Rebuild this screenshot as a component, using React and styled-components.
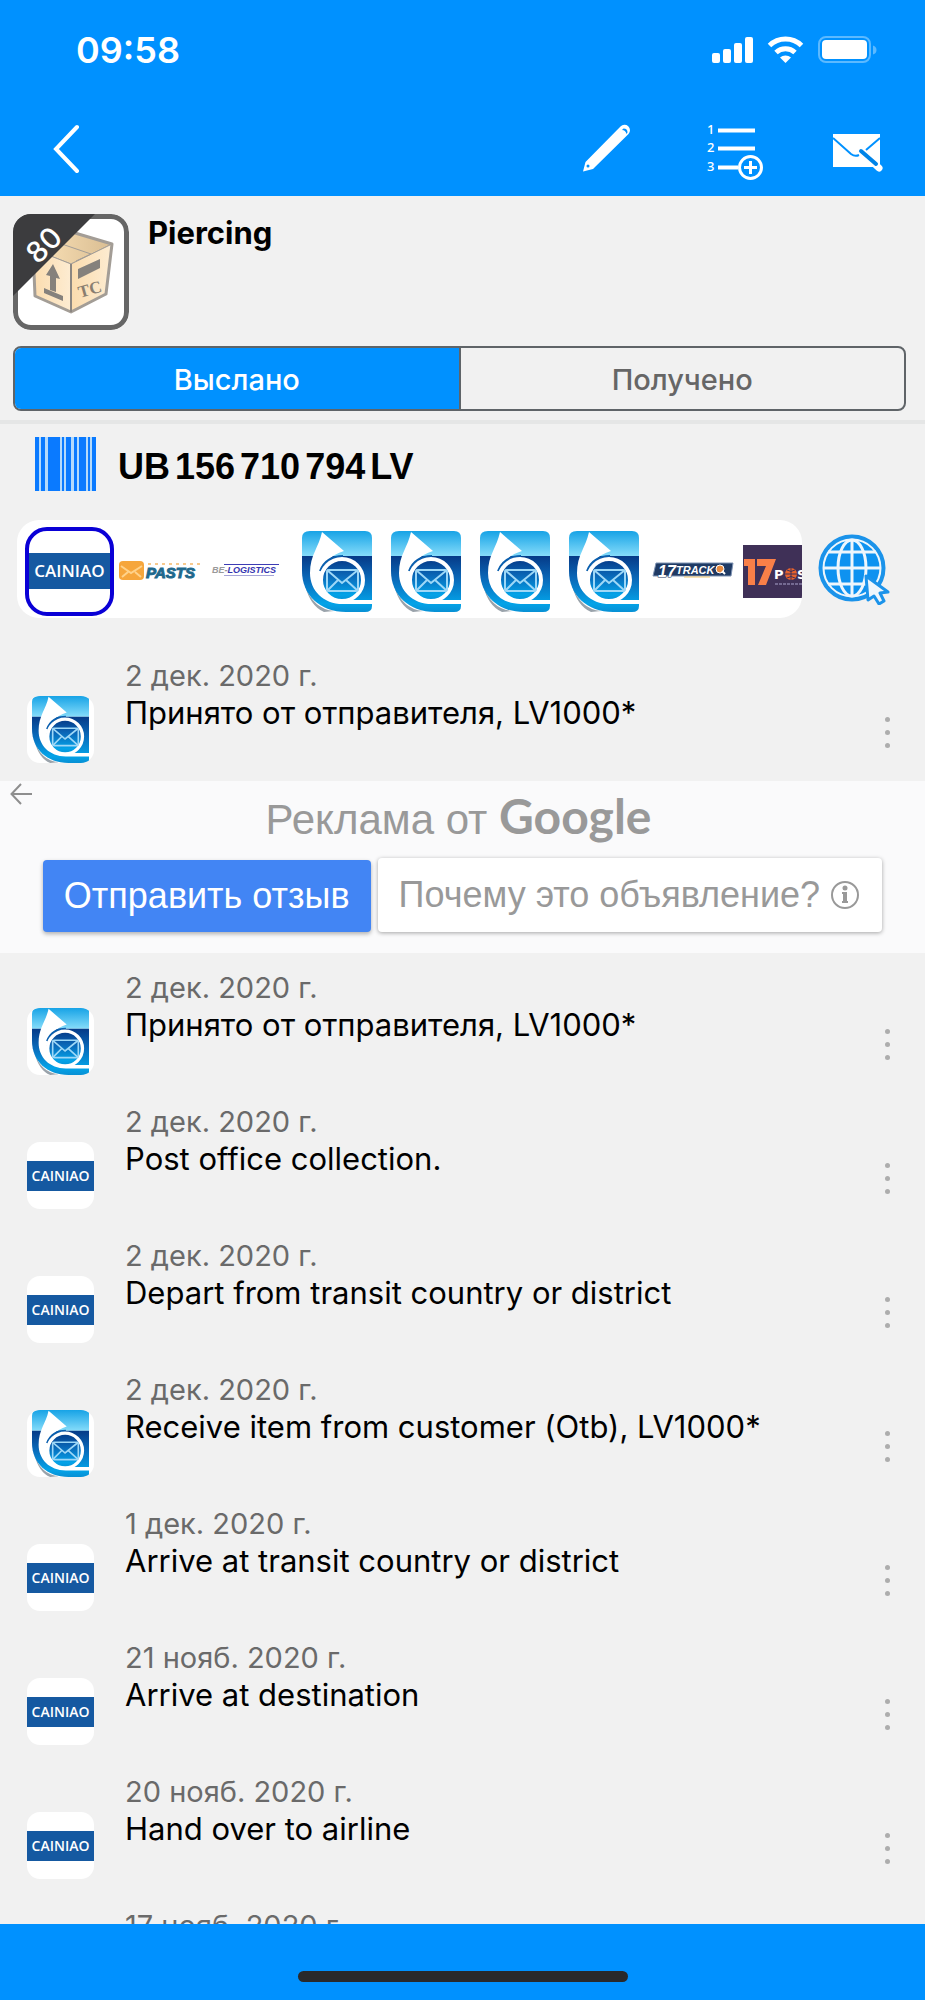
import styled, { createGlobalStyle } from "styled-components";

const events = [
  { date: "2 дек. 2020 г.", text: "Принято от отправителя, LV1000*", carrier: "horn" },
  { ad: true },
  { date: "2 дек. 2020 г.", text: "Принято от отправителя, LV1000*", carrier: "horn" },
  { date: "2 дек. 2020 г.", text: "Post office collection.", carrier: "cainiao" },
  { date: "2 дек. 2020 г.", text: "Depart from transit country or district", carrier: "cainiao" },
  { date: "2 дек. 2020 г.", text: "Receive item from customer (Otb), LV1000*", carrier: "horn" },
  { date: "1 дек. 2020 г.", text: "Arrive at transit country or district", carrier: "cainiao" },
  { date: "21 нояб. 2020 г.", text: "Arrive at destination", carrier: "cainiao" },
  { date: "20 нояб. 2020 г.", text: "Hand over to airline", carrier: "cainiao" },
  { date: "17 нояб. 2020 г.", text: "", carrier: "horn" },
];

const trackNumber = ["UB", "156", "710", "794", "LV"];

function StatusIcons() {
  return (
    <svg width="166" height="28" viewBox="0 0 166 28" fill="#fff">
      <rect x="0" y="17" width="8" height="10" rx="2" />
      <rect x="11" y="13" width="8" height="14" rx="2" />
      <rect x="22" y="7" width="8" height="20" rx="2" />
      <rect x="33" y="1" width="8" height="26" rx="2" />
      <g fill="none" stroke="#fff" strokeWidth="5">
        <path d="M57.5 9.5a23 23 0 0 1 32 0" />
        <path d="M64 16.5a14 14 0 0 1 19 0" />
      </g>
      <path d="M73.500 27l-5.500-5.500a8.500 8.500 0 0 1 11 0z" />
      <rect x="107" y="1" width="51" height="25" rx="7" fill="none" stroke="#5cb9ff" strokeWidth="2" />
      <rect x="110" y="4" width="45" height="19" rx="4" />
      <path d="M161 9.500q3.500 1 3.500 4.500t-3.500 4.500z" fill="#5cb9ff" />
    </svg>
  );
}

function BackIcon() {
  return (
    <svg width="28" height="50" viewBox="0 0 28 50" fill="none" stroke="#fff" strokeWidth="4" strokeLinecap="round">
      <path d="M25 4L4 26l21 22" />
    </svg>
  );
}

function PencilIcon() {
  return (
    <svg width="48" height="48" viewBox="0 0 48 48">
      <path d="M0 47.500l2.500-9.500L37.500 2.500a5.300 5.300 0 0 1 8 7.500L10 45z" fill="#fff" />
      <path d="M40.500 4.500a4 4 0 0 1 4 4l-1 1.500q-1-4-4.500-4z" fill="#0091ff" />
      <circle cx="5" cy="42" r="1.500" fill="#0091ff" />
    </svg>
  );
}

function ListAddIcon() {
  return (
    <svg width="62" height="66" viewBox="0 0 62 66" fill="none" stroke="#fff">
      <g fill="#fff" stroke="none" fontFamily="'Noto Sans', sans-serif" fontSize="13" fontWeight="500">
        <text x="6" y="19">1</text>
        <text x="6" y="37">2</text>
        <text x="6" y="56">3</text>
      </g>
      <path d="M17 15.500h37M17 33.500h37M17 52.500h20" strokeWidth="4" />
      <circle cx="49.500" cy="52.500" r="11" strokeWidth="3" />
      <path d="M49.500 46v13M43 52.500h13" strokeWidth="3" />
    </svg>
  );
}

function MailIcon() {
  return (
    <svg width="50" height="48" viewBox="0 0 50 48">
      <path d="M0 10h47v33H0z" fill="#fff" />
      <path d="M0 14l18 16q4 3 8 1M47 14L33 26" fill="none" stroke="#0091ff" strokeWidth="2" />
      <path d="M29 28l17 16" stroke="#fff" strokeWidth="7" strokeLinecap="round" />
      <path d="M28 27l15 13" stroke="#0084e8" strokeWidth="4" strokeLinecap="round" />
    </svg>
  );
}

function BoxPicture() {
  return (
    <svg width="116" height="116" viewBox="0 0 116 116">
      <defs>
        <linearGradient id="boxTop" x1="0" y1="0" x2="1" y2="0">
          <stop offset="0" stopColor="#fce3b9" />
          <stop offset="1" stopColor="#d9bd92" />
        </linearGradient>
        <linearGradient id="boxSide" x1="0" y1="0" x2="1" y2="0">
          <stop offset="0" stopColor="#fbdcae" />
          <stop offset="1" stopColor="#fdecd2" />
        </linearGradient>
      </defs>
      <g stroke="#a39d96" strokeWidth="1" strokeLinejoin="round">
        <path d="M20 35L62 19l37 11-41 20z" fill="url(#boxTop)" />
        <path d="M20 35l38 15v48L22 82z" fill="url(#boxSide)" />
        <path d="M58 50l41-20-6 50-35 18z" fill="url(#boxSide)" />
        <path d="M40 27l38 13M50 23l-20 9M63 47l15-7" fill="none" />
        <path d="M62 19l37 11-6 50-35 18-36-16-2-47" fill="none" strokeWidth="3" />
        <path d="M58 50v48" fill="none" stroke="#8b8681" strokeWidth="2" />
      </g>
      <path d="M65 55l22-10v9L65 65zM40 50l7 15-4-1v14l-6-2V62l-4-1zM31 74l19 8v5l-19-8z" fill="#85817c" />
      <text
        x="67"
        y="84"
        transform="rotate(-16 67 84)"
        fill="#8a7e70"
        fontFamily="'Liberation Serif', serif"
        fontSize="17"
        fontWeight="700"
      >
        TC
      </text>
    </svg>
  );
}

function BarcodeIcon() {
  return (
    <svg width="61" height="54" viewBox="0 0 61 54" fill="#0a7aff">
      <rect width="61" height="54" fill="#b4dafb" />
      <path d="M0 0h4v54H0zM6 0h4v54H6zM13 0h12v54H13zM27 0h2v54h-2zM31 0h5v54h-5zM39 0h3v54h-3zM44 0h7v54h-7zM53 0h2v54h-2zM57 0h4v54h-4z" />
    </svg>
  );
}

function HornLogo({ height }) {
  return (
    <svg height={height} viewBox="0 0 70 81">
      <defs>
        <linearGradient id="hornSky" x1="0" y1="0" x2="0" y2="1">
          <stop offset="0" stopColor="#17a3e6" />
          <stop offset="1" stopColor="#85dcfa" />
        </linearGradient>
        <linearGradient id="hornSea" x1="0" y1="0" x2="0" y2="1">
          <stop offset="0" stopColor="#063a87" />
          <stop offset="0.4" stopColor="#0a68b8" />
          <stop offset="0.85" stopColor="#03a3e8" />
          <stop offset="1" stopColor="#0890d4" />
        </linearGradient>
      </defs>
      <path d="M3 54q8 24 29 26l-10 1Q8 75 3 54z" fill="#9aa3ab" />
      <path d="M0 25V7q0-7 8-7h55q7 0 7 7v18z" fill="url(#hornSky)" />
      <path d="M0 25h70v50q0 6-7 6H44C18 81 0 64 0 40z" fill="url(#hornSea)" />
      <path d="M20 1l22 19Q22 26 18 45q0 14 8 21 7 3 16 3h28v4H43C22 74 8 60 8 42 8 24 17 16 20 1z" fill="#fff" />
      <path d="M18 40Q24 25 41 25" fill="none" stroke="#0a5fae" strokeWidth="2" />
      <circle cx="40" cy="49" r="21" fill="url(#hornSea)" stroke="#fff" strokeWidth="4" />
      <g fill="none" stroke="#9ed8f7" strokeWidth="2">
        <rect x="25" y="39" width="31" height="21" rx="2" />
        <path d="M25 39l15 13 16-13M25 60l11-11M56 60L44 49" />
      </g>
    </svg>
  );
}

function PastsLogo() {
  return (
    <svg width="82" height="24" viewBox="0 0 82 24">
      <rect x="1" y="2" width="25" height="19" rx="4" fill="#f6a63c" />
      <path d="M3 7l10 7 11-7M4 18l6-5M23 18l-6-5" fill="none" stroke="#ffd28a" strokeWidth="2" />
      <path d="M30 5h52" stroke="#f7c98d" strokeWidth="2" strokeDasharray="3 4" />
      <text
        x="28"
        y="19"
        fill="#20688c"
        stroke="#20688c"
        strokeWidth="1"
        fontFamily="'Liberation Sans', sans-serif"
        fontSize="15"
        fontWeight="700"
        fontStyle="italic"
      >
        PASTS
      </text>
    </svg>
  );
}

function BeLogisticsLogo() {
  return (
    <svg width="76" height="20" viewBox="0 0 76 20">
      <path d="M14 3.500h55" stroke="#3c3cb4" strokeWidth="1" />
      <text x="2" y="12" fontFamily="'Liberation Sans', sans-serif" fontSize="9" fontWeight="700" fontStyle="italic">
        <tspan fill="#999">BE-</tspan>
        <tspan fill="#3434b0">LOGISTICS</tspan>
      </text>
      <path d="M14 14.500h50" stroke="#a5a5d8" strokeWidth="1" />
    </svg>
  );
}

function SeventeenTrackLogo() {
  return (
    <svg width="82" height="18" viewBox="0 0 82 18">
      <path d="M4 1h77l-2 13H1z" fill="#1f3a64" stroke="#7f93b3" strokeWidth="1" />
      <g fill="#fff" fontFamily="'Liberation Sans', sans-serif" fontWeight="700" fontStyle="italic">
        <text x="6" y="15" fontSize="16" stroke="#1f3a64" strokeWidth="1" paintOrder="stroke">17</text>
        <text x="24" y="12" fontSize="11">TRACK</text>
      </g>
      <circle cx="68" cy="7" r="4" fill="#e88a3d" stroke="#fff" strokeWidth="1" />
      <path d="M70 9l3 3" stroke="#fff" strokeWidth="2" />
      <path d="M32 15h26" stroke="#f2c56b" strokeWidth="1" />
    </svg>
  );
}

function SeventeenPostLogo() {
  return (
    <svg width="80" height="53" viewBox="0 0 80 53">
      <path d="M0 0h80v53H0z" fill="#3f3057" />
      <path d="M1 14h11v26H5V21H1zM14 14h19L23 40h-8l8-19h-9z" fill="#f97f48" />
      <g fontFamily="'DejaVu Sans', sans-serif" fontSize="13" fontWeight="700" fill="#fff">
        <text x="31" y="34">P</text>
        <text x="54" y="34">S</text>
      </g>
      <circle cx="48" cy="29" r="6" fill="#e8622c" />
      <path d="M42 29h12M48 23v12M44 25q4 3 8 0M44 33q4-3 8 0" fill="none" stroke="#3f3057" strokeWidth="1" />
      <path d="M32 39h40" stroke="#756a92" strokeWidth="2" strokeDasharray="3 1" />
    </svg>
  );
}

function GlobeIcon() {
  return (
    <svg width="72" height="72" viewBox="0 0 72 72">
      <circle cx="34" cy="35" r="31.500" fill="#eef6fc" stroke="#1b93ea" strokeWidth="4" />
      <circle cx="34" cy="35" r="27.500" fill="#0e92f0" />
      <g fill="none" stroke="#eef6fc" strokeWidth="3">
        <ellipse cx="34" cy="35" rx="14" ry="28" />
        <path d="M34 6v58M5 35h58M10 19h48M10 51h48" />
      </g>
      <path d="M48 43l2 24 6-4 5 8 5-3-4-8 8-1z" fill="#eef6fc" stroke="#1b93ea" strokeWidth="3" strokeLinejoin="round" />
    </svg>
  );
}

function AdBanner() {
  return (
    <Ad>
      <AdBack type="button" aria-label="Назад">
        <svg width="22" height="22" viewBox="0 0 22 22" fill="none" stroke="#8e8e8e" strokeWidth="2">
          <path d="M11 1L1.500 11 11 21M1.500 11H22" />
        </svg>
      </AdBack>
      <AdTitle>
        Реклама от <GoogleWord>Google</GoogleWord>
      </AdTitle>
      <AdButtons>
        <FeedbackButton type="button">Отправить отзыв</FeedbackButton>
        <WhyButton type="button">
          Почему это объявление?
          <svg width="30" height="30" viewBox="0 0 30 30" fill="#999">
            <circle cx="15" cy="15" r="13" fill="none" stroke="#999" strokeWidth="2" />
            <circle cx="15" cy="8" r="2.500" />
            <path d="M12 12h5v9h1v2h-6v-2h1v-7h-1z" />
          </svg>
        </WhyButton>
      </AdButtons>
    </Ad>
  );
}

function EventRow({ date, text, carrier }) {
  return (
    <Row>
      <Tile>{carrier === "horn" ? <HornLogo height={67} /> : <Band>CAINIAO</Band>}</Tile>
      <RowText>
        <RowDate>{date}</RowDate>
        <RowTitle>{text}</RowTitle>
      </RowText>
      <MoreButton type="button" aria-label="Ещё">
        <Dot />
        <Dot />
        <Dot />
      </MoreButton>
    </Row>
  );
}

function App() {
  return (
    <>
      <GlobalStyle />
      <Screen>
        <Header>
          <StatusBar>
            <span>09:58</span>
            <StatusIcons />
          </StatusBar>
          <Toolbar>
            <IconButton type="button" aria-label="Назад">
              <BackIcon />
            </IconButton>
            <Actions>
              <IconButton type="button" aria-label="Изменить">
                <PencilIcon />
              </IconButton>
              <IconButton type="button" aria-label="Добавить в список">
                <ListAddIcon />
              </IconButton>
              <IconButton type="button" aria-label="Прочитано">
                <MailIcon />
              </IconButton>
            </Actions>
          </Toolbar>
        </Header>

        <Package>
          <Thumb>
            <BoxPicture />
            <Corner />
            <Days>80</Days>
          </Thumb>
          <PackageName>Piercing</PackageName>
        </Package>

        <Segments>
          <Segment type="button" $active>
            Выслано
          </Segment>
          <Segment type="button">Получено</Segment>
        </Segments>

        <Tracking>
          <BarcodeIcon />
          <TrackNumber>
            {trackNumber.map((part) => (
              <span key={part}>{part}</span>
            ))}
          </TrackNumber>
        </Tracking>

        <CarrierRow>
          <Carriers>
            <Carrier type="button" $selected>
              <Band $large>CAINIAO</Band>
            </Carrier>
            <Carrier type="button" aria-label="Latvijas Pasts">
              <PastsLogo />
            </Carrier>
            <Carrier type="button" aria-label="BE-Logistics">
              <BeLogisticsLogo />
            </Carrier>
            {[1, 2, 3, 4].map((n) => (
              <Carrier type="button" aria-label="Post" key={n}>
                <HornLogo height={81} />
              </Carrier>
            ))}
            <Carrier type="button" aria-label="17track">
              <SeventeenTrackLogo />
            </Carrier>
            <Carrier type="button" aria-label="17post">
              <SeventeenPostLogo />
            </Carrier>
          </Carriers>
          <IconButton type="button" aria-label="Открыть сайт">
            <GlobeIcon />
          </IconButton>
        </CarrierRow>

        <Events>
          {events.map((event, i) => (event.ad ? <AdBanner key={i} /> : <EventRow key={i} {...event} />))}
        </Events>

        <Footer>
          <HomeIndicator />
        </Footer>
      </Screen>
    </>
  );
}

const GlobalStyle = createGlobalStyle`
  * {
    box-sizing: border-box;
  }

  body {
    margin: 0;
    background: #f1f1f1;
    font-family: Inter, "Liberation Sans", sans-serif;
    color: #000;
  }

  button {
    margin: 0;
    padding: 0;
    border: 0;
    background: none;
    font: inherit;
    color: inherit;
    cursor: pointer;
  }

  svg {
    display: block;
    flex: none;
  }
`;

const Screen = styled.div`
  display: flex;
  flex-direction: column;
  height: 100vh;
  overflow: hidden;
`;

const Header = styled.header`
  flex: none;
  background: #0091ff;
  color: #fff;
`;

const StatusBar = styled.div`
  display: flex;
  align-items: center;
  justify-content: space-between;
  height: 100px;
  padding: 0 47px 0 76px;
  font-size: 36px;
  font-weight: 600;
`;

const Toolbar = styled.div`
  display: flex;
  align-items: center;
  justify-content: space-between;
  height: 96px;
  padding: 0 42px 0 52px;
`;

const Actions = styled.div`
  display: flex;
  align-items: center;
  gap: 70px;
`;

const IconButton = styled.button`
  flex: none;
`;

const Package = styled.section`
  display: flex;
  flex: none;
  gap: 19px;
  padding: 18px 13px 16px;
`;

const Thumb = styled.div`
  position: relative;
  width: 116px;
  height: 116px;
  border-radius: 18px;
  background: #fff;
  overflow: hidden;

  &::after {
    content: "";
    position: absolute;
    inset: 0;
    border: 5px solid #666;
    border-radius: 18px;
  }
`;

const Corner = styled.div`
  position: absolute;
  z-index: 1;
  top: 0;
  left: 0;
  width: 82px;
  height: 82px;
  background: #3c3c3e;
  clip-path: polygon(0 0, 100% 0, 0 100%);
`;

const Days = styled.span`
  position: absolute;
  z-index: 2;
  top: 12px;
  left: 8px;
  width: 46px;
  line-height: 38px;
  text-align: center;
  font-size: 29px;
  font-weight: 500;
  color: #fff;
  transform: rotate(-45deg);
`;

const PackageName = styled.h1`
  margin: 0;
  font-size: 31px;
  font-weight: 700;
  line-height: 38px;
`;

const Segments = styled.div`
  display: flex;
  flex: none;
  height: 65px;
  margin: 0 19px 9px 13px;
  border: 2px solid #5f6468;
  border-radius: 8px;
  overflow: hidden;
`;

const Segment = styled.button`
  flex: 1;
  padding-top: 2px;
  font-size: 29px;
  font-weight: 500;
  background: ${(props) => (props.$active ? "#0091ff" : "transparent")};
  color: ${(props) => (props.$active ? "#fff" : "#666")};

  & + & {
    border-left: 2px solid #5f6468;
  }
`;

const Tracking = styled.section`
  display: flex;
  flex: none;
  align-items: center;
  gap: 22px;
  padding: 13px 35px 29px;
  border-top: 4px solid #e5e6e6;
`;

const TrackNumber = styled.div`
  display: flex;
  gap: 5px;
  padding-top: 6px;
  font-family: "Liberation Sans", Arial, sans-serif;
  font-size: 36px;
  font-weight: 700;
  line-height: 40px;
`;

const CarrierRow = styled.section`
  display: flex;
  flex: none;
  align-items: center;
  gap: 16px;
  padding: 0 35px 0 17px;
`;

const Carriers = styled.div`
  display: flex;
  flex: 1;
  align-items: center;
  height: 98px;
  padding: 4px 0 0 8px;
  border-radius: 22px;
  background: #fff;
  overflow: hidden;
`;

const Carrier = styled.button`
  display: flex;
  flex: 0 0 89px;
  align-items: center;
  justify-content: center;
  height: 89px;
  border: ${(props) => (props.$selected ? "4px solid #0a00d6" : "0")};
  border-radius: ${(props) => (props.$selected ? "22px" : "0")};

  &:last-child {
    justify-content: flex-start;
    padding-left: 6px;
  }
`;

const Band = styled.span`
  display: block;
  width: 100%;
  background: #1559a1;
  color: #fff;
  font-family: "Open Sans", sans-serif;
  font-size: ${(props) => (props.$large ? "17px" : "14px")};
  font-weight: 600;
  line-height: ${(props) => (props.$large ? "36px" : "30px")};
  text-align: center;
`;

const Events = styled.main`
  flex: 1;
  min-height: 0;
  padding-top: 23px;
  overflow: hidden;
`;

const Row = styled.article`
  display: flex;
  gap: 31px;
  height: 134px;
  padding: 17px 27px 0;
`;

const Tile = styled.div`
  display: flex;
  flex: none;
  align-items: center;
  justify-content: center;
  width: 67px;
  height: 67px;
  margin-top: 38px;
  border-radius: 13px;
  background: #fff;
  overflow: hidden;
`;

const RowText = styled.div`
  flex: 1;
  min-width: 0;
`;

const RowDate = styled.div`
  font-size: 29px;
  line-height: 36px;
  color: #6a6a6a;
`;

const RowTitle = styled.div`
  font-size: 31px;
  line-height: 38px;
`;

const MoreButton = styled.button`
  display: flex;
  flex-direction: column;
  align-self: flex-start;
  align-items: center;
  gap: 8px;
  width: 22px;
  margin-top: 59px;
`;

const Dot = styled.span`
  width: 5px;
  height: 5px;
  border-radius: 50%;
  background: #adadad;
`;

const Ad = styled.aside`
  position: relative;
  display: flex;
  flex-direction: column;
  align-items: center;
  height: 172px;
  margin-top: 6px;
  padding-top: 9px;
  background: #fafafb;
  font-family: "Liberation Sans", Arial, sans-serif;
`;

const AdBack = styled.button`
  position: absolute;
  top: 2px;
  left: 10px;
`;

const AdTitle = styled.div`
  padding-right: 8px;
  font-size: 42px;
  line-height: 52px;
  color: #999;
`;

const GoogleWord = styled.span`
  font-family: Lato, sans-serif;
  font-size: 48px;
  font-weight: 700;
`;

const AdButtons = styled.div`
  display: flex;
  align-items: flex-end;
  gap: 7px;
  margin-top: 12px;
`;

const FeedbackButton = styled.button`
  height: 72px;
  padding: 0 21px;
  border-radius: 4px;
  background: #4285f4;
  box-shadow: 0 2px 4px rgba(0, 0, 0, 0.3);
  font-size: 36px;
  color: #fff;
`;

const WhyButton = styled.button`
  display: flex;
  align-items: center;
  gap: 10px;
  height: 74px;
  padding: 0 22px 0 21px;
  border-radius: 4px;
  background: #fff;
  box-shadow: 0 1px 4px rgba(0, 0, 0, 0.35);
  font-size: 36px;
  color: #999;
`;

const Footer = styled.footer`
  display: flex;
  flex: none;
  align-items: flex-end;
  justify-content: center;
  height: 76px;
  padding-bottom: 18px;
  background: #0091ff;
`;

const HomeIndicator = styled.div`
  width: 330px;
  height: 11px;
  border-radius: 6px;
  background: #29292b;
`;

export default App;
